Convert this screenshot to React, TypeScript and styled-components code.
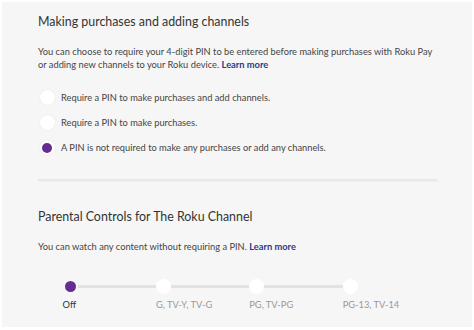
import React from "react";
import styled, { createGlobalStyle } from "styled-components";

const GlobalStyle = createGlobalStyle`
  html, body {
    margin: 0;
    padding: 0;
    background: #fff;
  }
  body {
    font-family: Lato, "Open Sans", "Liberation Sans", sans-serif;
  }
`;

const PURPLE = "#662d91";

const purchaseOptions = [
  "Require a PIN to make purchases and add channels.",
  "Require a PIN to make purchases.",
  "A PIN is not required to make any purchases or add any channels.",
];

const ratings = ["Off", "G, TV-Y, TV-G", "PG, TV-PG", "PG-13, TV-14"];

export default function App() {
  const selectedOption = 2;
  const selectedRating = 0;

  return (
    <>
      <GlobalStyle />
      <Panel>
        <Section>
          <Title>Making purchases and adding channels</Title>
          <Text>
            You can choose to require your 4-digit PIN to be entered before making purchases with Roku Pay
            <br />
            or adding new channels to your Roku device. <Link>Learn more</Link>
          </Text>
          <Options>
            {purchaseOptions.map((label, i) => (
              <Option key={label}>
                <Radio checked={i === selectedOption} />
                <OptionLabel>{label}</OptionLabel>
              </Option>
            ))}
          </Options>
        </Section>
        <Divider />
        <Section>
          <Title>Parental Controls for The Roku Channel</Title>
          <Text>
            You can watch any content without requiring a PIN. <Link>Learn more</Link>
          </Text>
          <Slider>
            <Track />
            {ratings.map((label, i) => (
              <Stop key={label}>
                <Dot checked={i === selectedRating} />
                <StopLabel active={i === selectedRating}>{label}</StopLabel>
              </Stop>
            ))}
          </Slider>
        </Section>
      </Panel>
    </>
  );
}

const Panel = styled.div`
  margin: 2px;
  width: 470px;
  height: 325px;
  background: #f6f6f6;
  box-sizing: border-box;
  padding: 10px 0 0 36px;
  overflow: hidden;
`;

const Section = styled.div`
  display: flex;
  flex-direction: column;
`;

const Title = styled.h2`
  margin: 0;
  font-size: 12.4px;
  font-weight: 400;
  color: #333;
  line-height: 20px;
`;

const Text = styled.p`
  margin: 12.5px 0 0;
  font-size: 9.3px;
  line-height: 13px;
  color: #444;
  white-space: nowrap;
`;

const Link = styled.a`
  color: #2a3a8f;
  font-weight: 700;
  cursor: pointer;
`;

const Options = styled.div`
  display: flex;
  flex-direction: column;
  gap: 10px;
  margin-top: 19.5px;
  padding-left: 1.5px;
`;

const Option = styled.label`
  display: flex;
  align-items: center;
  gap: 6.5px;
  height: 15px;
`;

const Radio = styled.span<{ checked?: boolean }>`
  width: 15px;
  height: 15px;
  border-radius: 50%;
  background: #fff;
  box-shadow: 0 0 2px rgba(0, 0, 0, 0.08);
  position: relative;
  flex-shrink: 0;
  &::after {
    content: "";
    display: ${(p) => (p.checked ? "block" : "none")};
    position: absolute;
    inset: 2.5px;
    border-radius: 50%;
    background: ${PURPLE};
  }
`;

const OptionLabel = styled.span`
  font-size: 9.3px;
  color: #444;
`;

const Divider = styled.hr`
  margin: 23.5px 35px 26.5px 0;
  border: none;
  height: 2px;
  background: #e8e8e8;
  box-shadow: 0 1px 2px rgba(0, 0, 0, 0.04);
`;

const Slider = styled.div`
  position: relative;
  display: grid;
  grid-template-columns: repeat(4, 93.4px);
  margin: 26px 0 0 24.5px;
`;

const Track = styled.div`
  position: absolute;
  left: 7px;
  width: 280px;
  top: 6px;
  height: 3px;
  background: #e2e2e2;
`;

const Stop = styled.div`
  position: relative;
  display: flex;
  flex-direction: column;
  align-items: flex-start;
`;

const Dot = styled.span<{ checked?: boolean }>`
  width: 15px;
  height: 15px;
  border-radius: 50%;
  box-sizing: border-box;
  border: ${(p) => (p.checked ? "2.5px solid #f6f6f6" : "none")};
  background: ${(p) => (p.checked ? PURPLE : "#fff")};
`;

const StopLabel = styled.span<{ active?: boolean }>`
  margin-top: 5.5px;
  font-size: 9.3px;
  line-height: 12px;
  color: ${(p) => (p.active ? "#333" : "#999")};
`;
